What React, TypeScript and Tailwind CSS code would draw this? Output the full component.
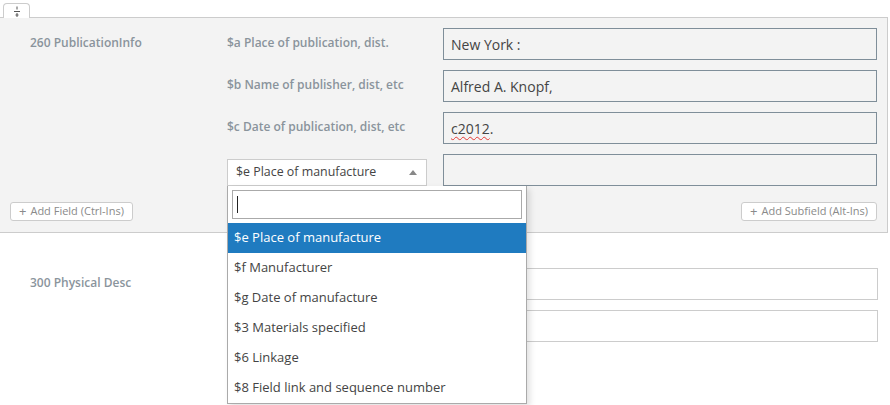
import React from 'react';

const font = { fontFamily: '"Open Sans", "Liberation Sans", sans-serif' };

function CollapseIcon() {
  return (
    <svg width="10" height="11" viewBox="0 0 10 11" className="text-[#555]">
      <path d="M5 0.5v3M2 5.5h6M5 7v4M3.5 9h3" stroke="currentColor" strokeWidth="1" fill="none" />
    </svg>
  );
}

function SubfieldRow({ label, value }: { label: string; value: React.ReactNode }) {
  return (
    <div className="flex items-center h-8">
      <div className="w-[216px] text-[12px] font-semibold text-[#8a949c] -mt-[3px]">{label}</div>
      <div className="flex-1 h-8 border border-[#7f8e99] bg-[#f3f3f3] flex items-center px-[7px] text-[14px] text-[#444]">
        {value}
      </div>
    </div>
  );
}

function AddButton({ label }: { label: string }) {
  return (
    <button className="h-[19px] flex items-center gap-1 px-2 border border-[#ccc] rounded-[3px] bg-white text-[11px] text-[#8a8a8a]">
      <span className="text-[13px] leading-none -mt-px">+</span>
      {label}
    </button>
  );
}

const options = [
  '$f Manufacturer',
  '$g Date of manufacture',
  '$3 Materials specified',
  '$6 Linkage',
  '$8 Field link and sequence number',
];

export default function App() {
  return (
    <div className="w-[890px] h-[405px] bg-white overflow-hidden" style={font}>
      <div className="pt-[3px] pl-[3px] flex">
        <div className="w-[27px] h-[15px] -mb-px border border-[#ccc] border-b-0 rounded-t-[4px] bg-white flex items-center justify-center relative z-10">
          <CollapseIcon />
        </div>
      </div>
      <div className="w-[888px] bg-[#f3f3f3] border-t border-b border-r border-[#ccc] pt-[10px] pb-[11px]">
        <div className="flex pr-[10px]">
          <div className="w-[227px] pl-[30px] pt-[6px] text-[12px] font-semibold text-[#8a949c]">260 PublicationInfo</div>
          <div className="flex-1 flex flex-col gap-[10px]">
            <SubfieldRow label="$a Place of publication, dist." value="New York :" />
            <SubfieldRow label="$b Name of publisher, dist, etc" value="Alfred A. Knopf," />
            <SubfieldRow
              label="$c Date of publication, dist, etc"
              value={
                <span>
                  <span className="underline decoration-wavy decoration-[#e53935] decoration-1 underline-offset-2">c2012</span>.
                </span>
              }
            />
            <div className="flex items-start h-8">
              <div className="w-[216px] relative">
                <div className="mt-[5px] w-[200px] h-[27px] border border-[#ccc] bg-white flex items-center justify-between pl-2 pr-[9px] text-[12.4px] text-[#444]">
                  <span>$e Place of manufacture</span>
                  <svg width="8" height="5" viewBox="0 0 8 5">
                    <path d="M0 5L4 0L8 5Z" fill="#888" />
                  </svg>
                </div>
                <div className="absolute left-0 top-[32px] w-[300px] z-20 bg-white border border-[#aaa] border-t-0 shadow-[3px_3px_6px_rgba(0,0,0,0.12)]">
                  <div className="px-[4px] pt-[4px] pb-[4px]">
                    <div className="h-[29px] border border-[#aaa] bg-white flex items-center pl-[4px]">
                      <div className="w-px h-[17px] bg-[#222]" />
                    </div>
                  </div>
                  <div className="h-[30px] bg-[#1f7bc0] text-white text-[13px] flex items-center pl-[6px]">
                    $e Place of manufacture
                  </div>
                  {options.map((o) => (
                    <div key={o} className="h-[30px] text-[13px] text-[#444] flex items-center pl-[6px]">
                      {o}
                    </div>
                  ))}
                </div>
              </div>
              <div className="flex-1 h-8 border border-[#7f8e99] bg-[#f3f3f3]" />
            </div>
          </div>
        </div>
        <div className="flex justify-between px-[10px] mt-[16px]">
          <AddButton label="Add Field (Ctrl-Ins)" />
          <AddButton label="Add Subfield (Alt-Ins)" />
        </div>
      </div>
      <div className="flex pr-[12px] pt-[35px]">
        <div className="w-[227px] pl-[30px] pt-[6px] text-[12px] font-semibold text-[#8a949c]">300 Physical Desc</div>
        <div className="flex-1 flex flex-col gap-[10px]">
          <div className="flex h-8">
            <div className="w-[216px]" />
            <div className="flex-1 h-8 border border-[#ccc] bg-white" />
          </div>
          <div className="flex h-8">
            <div className="w-[216px]" />
            <div className="flex-1 h-8 border border-[#ccc] bg-white" />
          </div>
        </div>
      </div>
    </div>
  );
}
